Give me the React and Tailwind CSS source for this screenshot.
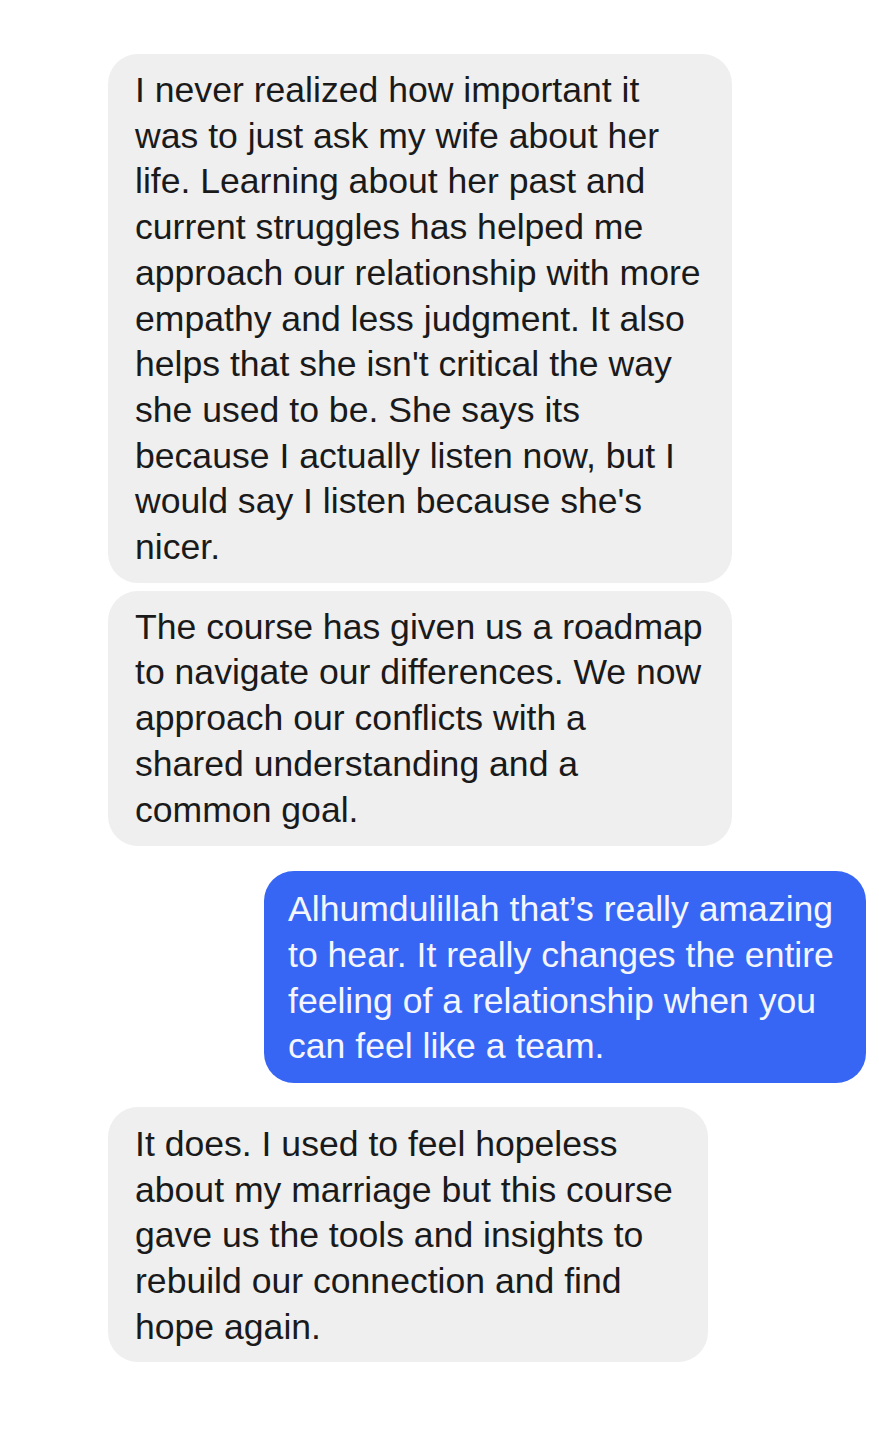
import React from "react";

const font = { fontFamily: '"Liberation Sans", Arial, sans-serif' };

function Lines({ lines }) {
  return lines.map((l, i) => (
    <span key={i} className="block whitespace-nowrap">
      {l}
    </span>
  ));
}

export default function App() {
  return (
    <div
      className="w-[879px] h-[1440px] bg-white flex flex-col pt-[54px] text-[35.6px] leading-[45.7px]"
      style={font}
    >
      <div className="ml-[108px] w-[624px] rounded-[30px] bg-[#efefef] pl-[27px] pt-[14px] pb-[12px] text-[#1a1a1a]">
        <Lines
          lines={[
            "I never realized how important it",
            "was to just ask my wife about her",
            "life. Learning about her past and",
            "current struggles has helped me",
            "approach our relationship with more",
            "empathy and less judgment. It also",
            "helps that she isn't critical the way",
            "she used to be. She says its",
            "because I actually listen now, but I",
            "would say I listen because she's",
            "nicer.",
          ]}
        />
      </div>
      <div className="mt-[8px] ml-[108px] w-[624px] rounded-[30px] bg-[#efefef] pl-[27px] pt-[14px] pb-[13px] text-[#1a1a1a]">
        <Lines
          lines={[
            "The course has given us a roadmap",
            "to navigate our differences. We now",
            "approach our conflicts with a",
            "shared understanding and a",
            "common goal.",
          ]}
        />
      </div>
      <div className="mt-[25px] ml-[264px] w-[602px] rounded-[30px] bg-[#3866f4] pl-[24px] pt-[16px] pb-[13px] text-[#f4f6ff]">
        <Lines
          lines={[
            "Alhumdulillah that’s really amazing",
            "to hear. It really changes the entire",
            "feeling of a relationship when you",
            "can feel like a team.",
          ]}
        />
      </div>
      <div className="mt-[24px] ml-[108px] w-[600px] rounded-[30px] bg-[#efefef] pl-[27px] pt-[15px] pb-[11px] text-[#1a1a1a]">
        <Lines
          lines={[
            "It does. I used to feel hopeless",
            "about my marriage but this course",
            "gave us the tools and insights to",
            "rebuild our connection and find",
            "hope again.",
          ]}
        />
      </div>
    </div>
  );
}
